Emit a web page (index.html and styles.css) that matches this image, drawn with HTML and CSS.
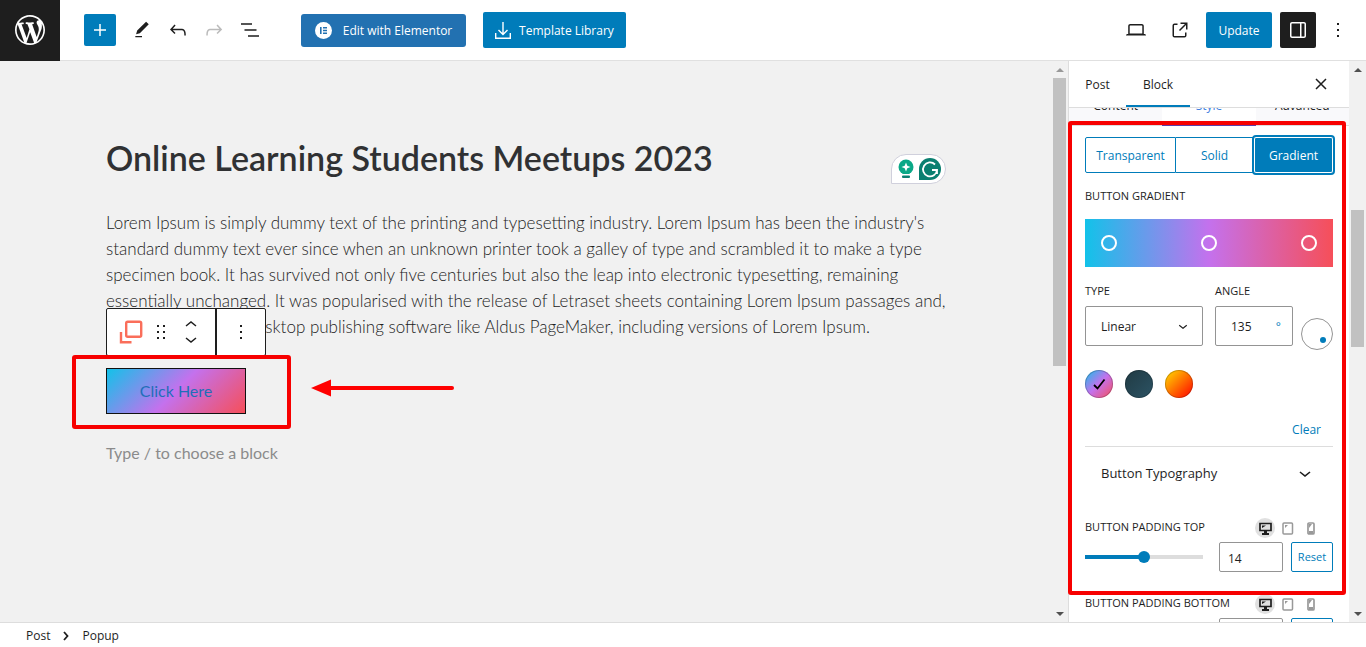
FILE: index.html
```html
<!DOCTYPE html>
<html lang="en">
<head>
<meta charset="utf-8">
<title>Edit Post</title>
<link rel="stylesheet" href="styles.css">
</head>
<body>

<header class="topbar">
	<a class="wp-logo" href="#" aria-label="View posts">
		<svg width="30" height="30" viewBox="0 0 20 20"><path d="M20 10c0-5.51-4.49-10-10-10C4.48 0 0 4.49 0 10c0 5.52 4.48 10 10 10 5.51 0 10-4.48 10-10zM7.78 15.37L4.37 6.22c.55-.02 1.17-.08 1.17-.08.5-.06.44-1.13-.06-1.11 0 0-1.45.11-2.37.11-.18 0-.37 0-.58-.01C4.12 2.69 6.87 1.11 10 1.11c2.33 0 4.45.87 6.05 2.34-.68-.11-1.65.39-1.65 1.58 0 .74.45 1.36.9 2.1.35.61.55 1.36.55 2.46 0 1.49-1.4 5-1.4 5l-3.03-8.37c.54-.02.82-.17.82-.17.5-.05.44-1.25-.06-1.22 0 0-1.44.12-2.38.12-.87 0-2.33-.12-2.33-.12-.5-.03-.56 1.2-.06 1.22l.92.08 1.26 3.41zM17.41 10c.24-.64.74-1.87.43-4.25.7 1.29 1.05 2.71 1.05 4.25 0 3.29-1.73 6.24-4.4 7.78.97-2.59 1.94-5.2 2.92-7.78zM6.1 18.09C3.12 16.65 1.11 13.53 1.11 10c0-1.3.23-2.48.72-3.59C3.25 10.3 4.67 14.2 6.1 18.09zm4.03-6.63l2.58 6.98c-.86.29-1.76.45-2.71.45-.79 0-1.57-.11-2.29-.33.81-2.38 1.62-4.74 2.42-7.1z"/></svg>
	</a>
	<div class="tools">
		<button class="add" aria-label="Add block"><svg class="icon" viewBox="0 0 24 24"><path d="M11.25 6h1.5v5.25H18v1.5h-5.25V18h-1.5v-5.25H6v-1.5h5.25z"/></svg></button>
		<button class="tool" aria-label="Tools"><svg class="icon" viewBox="0 0 24 24"><path d="M20.1 5.1L16.9 2 6.2 12.7l-1.3 4.4 4.5-1.2L20.1 5.1zM4 20.8h8v-1.5H4v1.5z"/></svg></button>
		<button class="tool" aria-label="Undo"><svg class="icon" viewBox="0 0 24 24"><path d="M18.3 11.7c-.6-.6-1.4-.9-2.3-.9H6.7l2.9-3.3-1.1-1-4.5 5L8.5 16l1-1-2.7-2.7H16c.5 0 .9.2 1.3.5 1 1 1 3.4 1 4.5v.3h1.5v-.2c0-1.5 0-4.3-1.5-5.7z"/></svg></button>
		<button class="tool off" aria-label="Redo"><svg class="icon" viewBox="0 0 24 24"><path d="M15.6 6.5l-1.1 1 2.9 3.3H8c-.9 0-1.7.3-2.3.9-1.4 1.5-1.4 4.2-1.4 5.6v.2h1.5v-.3c0-1.1 0-3.5 1-4.5.3-.3.7-.5 1.3-.5h9.2L14.5 15l1.1 1.1 4.6-4.6-4.6-5z"/></svg></button>
		<button class="tool" aria-label="Document overview"><svg class="icon" viewBox="0 0 24 24"><path d="M3 5.2h11v1.5H3zM6.5 11.2h12v1.5h-12zM10 17.2h11v1.5H10z"/></svg></button>
	</div>
	<button class="btn elementor"><svg width="17" height="17" viewBox="0 0 17 17"><circle cx="8.5" cy="8.5" r="8.5" fill="#fff"/><path fill="#2271b1" d="M5 5h1.6v7H5zM8 5h4v1.4H8zM8 7.8h4v1.4H8zM8 10.6h4V12H8z"/></svg>Edit with Elementor</button>
	<button class="btn library"><svg width="16" height="18" viewBox="0 0 16 18" fill="none" stroke="#fff" stroke-width="1.4"><path d="M8 0v12M3.5 8L8 12.5 12.5 8M.7 11v5.3h14.6V11"/></svg>Template Library</button>
	<div class="actions">
		<button class="tool" aria-label="Preview"><svg class="icon" viewBox="0 0 24 24"><path d="M20.5 16h-.7V8c0-1.1-.9-2-2-2H6.2c-1.1 0-2 .9-2 2v8h-.7c-.8 0-1.5.7-1.5 1.5h20c0-.8-.7-1.5-1.5-1.5zM5.7 8c0-.3.2-.5.5-.5h11.6c.3 0 .5.2.5.5v7.6H5.7V8z"/></svg></button>
		<button class="tool" aria-label="View post"><svg class="icon" viewBox="0 0 24 24"><path d="M19.5 4.5h-7V6h4.44l-5.97 5.97 1.06 1.06L18 7.06v4.44h1.5v-7Zm-13 1a2 2 0 0 0-2 2v10a2 2 0 0 0 2 2h10a2 2 0 0 0 2-2v-3H17v3a.5.5 0 0 1-.5.5h-10a.5.5 0 0 1-.5-.5v-10a.5.5 0 0 1 .5-.5h3V5.5h-3Z"/></svg></button>
		<button class="btn update">Update</button>
		<button class="settings" aria-label="Settings"><svg class="icon" viewBox="0 0 24 24"><path fill-rule="evenodd" d="M18 4H6c-1.1 0-2 .9-2 2v12c0 1.1.9 2 2 2h12c1.1 0 2-.9 2-2V6c0-1.1-.9-2-2-2zm-4 14.5H6c-.3 0-.5-.2-.5-.5V6c0-.3.2-.5.5-.5h8v13zm4.500-.5c0 .3-.2.5-.5.5h-2.500v-13H18c.3 0 .5.2.5.5v12z"/></svg></button>
		<button class="more" aria-label="Options"><svg class="icon" viewBox="0 0 24 24"><path d="M13 19h-2v-2h2v2zm0-6h-2v-2h2v2zm0-6h-2V5h2v2z"/></svg></button>
	</div>
</header>

<div class="workspace">
	<main class="editor">
		<article class="post">
			<h1>Online Learning Students Meetups 2023</h1>
			<p>Lorem Ipsum is simply dummy text of the printing and typesetting industry. Lorem Ipsum has been the industry's<br>
			standard dummy text ever since when an unknown printer took a galley of type and scrambled it to make a type<br>
			specimen book. It has survived not only five centuries but also the leap into electronic typesetting, remaining<br>
			essentially unchanged. It was popularised with the release of Letraset sheets containing Lorem Ipsum passages and,<br>
			more recently with desktop publishing software like Aldus PageMaker, including versions of Lorem Ipsum.</p>
			<div class="popup-block">
				<button class="click-here">Click Here</button>
				<div class="block-toolbar">
					<button class="popup-icon" aria-label="Popup"><svg width="24" height="24" viewBox="0 0 24 24" fill="none" stroke="#fa6e5a" stroke-width="2.4"><rect x="7.2" y="1.7" width="15" height="15" rx="1.5"/><path d="M2 12v10.3h10.5"/></svg></button>
					<button aria-label="Drag"><svg class="icon" viewBox="0 0 24 24"><path d="M8 7h2V5H8v2zm0 6h2v-2H8v2zm0 6h2v-2H8v2zm6-14v2h2V5h-2zm0 8h2v-2h-2v2zm0 6h2v-2h-2v2z"/></svg></button>
					<button class="movers" aria-label="Move"><svg width="14" height="24" viewBox="0 0 14 24" fill="none" stroke="#1e1e1e" stroke-width="1.5"><path d="M2 6l5-4 5 4M2 18l5 4 5-4"/></svg></button>
					<button class="block-more" aria-label="Options"><svg class="icon" viewBox="0 0 24 24"><path d="M13 19h-2v-2h2v2zm0-6h-2v-2h2v2zm0-6h-2V5h2v2z"/></svg></button>
				</div>
				<div class="mark mark-button"></div>
				<svg class="arrow" width="144" height="18" viewBox="0 0 144 18"><path d="M0 9L20 .5v17z" fill="red"/><path d="M18 9h123" stroke="red" stroke-width="4" stroke-linecap="round"/></svg>
			</div>
			<p class="placeholder">Type / to choose a block</p>
			<div class="grammar">
				<svg width="16" height="20" viewBox="0 0 16 20"><circle cx="8" cy="8" r="7.5" fill="#0aa887"/><path d="M4 12h8l-1 4H5z" fill="#0aa887"/><path d="M3 15.5h10" stroke="#fff"/><rect x="4" y="16.500" width="8" height="2.5" rx="1" fill="#0a7f70"/><path d="M8 3.5l1.3 3.2L12.5 8 9.3 9.3 8 12.5 6.7 9.3 3.5 8l3.2-1.3z" fill="#fff"/></svg>
				<svg width="22" height="22" viewBox="0 0 22 22"><path d="M11 0a11 11 0 0 1 0 22H0V11A11 11 0 0 1 11 0z" fill="#0a7f70"/><path d="M16 6.5A7 7 0 1 0 18 12h-5M18 12v4" fill="none" stroke="#fff" stroke-width="1.8"/></svg>
			</div>
		</article>
		<div class="scrollbar">
			<i class="up"></i><i class="thumb thumb-editor"></i><i class="down"></i>
		</div>
	</main>

	<aside class="sidebar">
		<div class="panel">
			<div class="panel-tabs">
				<button>Post</button>
				<button class="current">Block</button>
				<button class="close" aria-label="Close settings"><svg width="12" height="12" viewBox="0 0 12 12" stroke="#1e1e1e" stroke-width="1.5"><path d="M1 1l10 10M11 1L1 11"/></svg></button>
			</div>
			<div class="panel-body">
				<div class="style-tabs"><button>Content</button><button class="current">Style</button><button>Advanced</button></div>
				<div class="controls">
					<div class="fill-type"><button>Transparent</button><button>Solid</button><button class="current">Gradient</button></div>
					<div class="label">Button Gradient</div>
					<div class="gradient-bar"><button aria-label="Stop 1"></button><button aria-label="Stop 2"></button><button aria-label="Stop 3"></button></div>
					<div class="gradient-opts">
						<div class="type-field">
							<label class="label" for="type">Type</label>
							<div class="select-wrap">
								<select id="type"><option>Linear</option><option>Radial</option></select>
								<svg class="icon chev" viewBox="0 0 24 24"><path d="M17.5 11.6L12 16l-5.5-4.4.9-1.2L12 14l4.5-3.6 1 1.2z"/></svg>
							</div>
						</div>
						<div class="angle-field">
							<label class="label" for="angle">Angle</label>
							<div class="angle-box"><input id="angle" type="text" value="135"><span>°</span></div>
						</div>
						<div class="dial"><i></i></div>
					</div>
					<div class="swatches">
						<button class="sw-one" aria-label="Gradient 1"><svg width="28" height="28" viewBox="0 0 28 28" fill="none" stroke="#000" stroke-width="1.8"><path d="M9 15l3.500 3.500L19.500 9.500"/></svg></button>
						<button class="sw-two" aria-label="Gradient 2"></button>
						<button class="sw-three" aria-label="Gradient 3"></button>
					</div>
					<button class="clear">Clear</button>
					<button class="typography">Button Typography<svg class="icon" viewBox="0 0 24 24"><path d="M17.5 11.6L12 16l-5.5-4.4.9-1.2L12 14l4.5-3.6 1 1.2z"/></svg></button>
					<div class="range-control">
						<div class="range-head">
							<label class="label" for="pad-top">Button Padding Top</label>
							<div class="devices">
								<button class="current" aria-label="Desktop"><svg width="13" height="13" viewBox="0 0 13 13"><path fill="none" stroke="#1e1e1e" stroke-width="1.7" d="M1 1.500h11v7H1z"/><path fill="#1e1e1e" d="M5 9h3v2h2v2H3v-2h2zM3 3.500h4L3 6z"/></svg></button>
								<button aria-label="Tablet"><svg width="12" height="13" viewBox="0 0 12 13"><rect x="1" y="1" width="9.500" height="11" rx="1" fill="none" stroke="#999" stroke-width="1.5"/><path fill="#999" d="M3 3h3L3 6z"/></svg></button>
								<button aria-label="Mobile"><svg width="8" height="13" viewBox="0 0 8 13"><rect x="1" y="1" width="6" height="11" rx="1" fill="none" stroke="#999" stroke-width="1.700"/><path fill="#999" d="M2 2h3L2 6zM2 9h4v3H2z"/></svg></button>
							</div>
						</div>
						<div class="range-row">
							<input id="pad-top" type="range" min="0" max="28" value="14">
							<input class="num" type="text" value="14" aria-label="Button padding top value">
							<button class="reset">Reset</button>
						</div>
					</div>
					<div class="range-control">
						<div class="range-head">
							<label class="label" for="pad-bottom">Button Padding Bottom</label>
							<div class="devices">
								<button class="current" aria-label="Desktop"><svg width="13" height="13" viewBox="0 0 13 13"><path fill="none" stroke="#1e1e1e" stroke-width="1.7" d="M1 1.500h11v7H1z"/><path fill="#1e1e1e" d="M5 9h3v2h2v2H3v-2h2zM3 3.500h4L3 6z"/></svg></button>
								<button aria-label="Tablet"><svg width="12" height="13" viewBox="0 0 12 13"><rect x="1" y="1" width="9.500" height="11" rx="1" fill="none" stroke="#999" stroke-width="1.5"/><path fill="#999" d="M3 3h3L3 6z"/></svg></button>
								<button aria-label="Mobile"><svg width="8" height="13" viewBox="0 0 8 13"><rect x="1" y="1" width="6" height="11" rx="1" fill="none" stroke="#999" stroke-width="1.700"/><path fill="#999" d="M2 2h3L2 6zM2 9h4v3H2z"/></svg></button>
							</div>
						</div>
						<div class="range-row">
							<input id="pad-bottom" type="range" min="0" max="28" value="14">
							<input class="num" type="text" value="14" aria-label="Button padding bottom value">
							<button class="reset">Reset</button>
						</div>
					</div>
				</div>
			</div>
		</div>
		<div class="scrollbar">
			<i class="up"></i><i class="thumb thumb-panel"></i><i class="down"></i>
		</div>
		<div class="mark mark-panel"></div>
	</aside>
</div>

<footer class="breadcrumb">
	<a href="#">Post</a>
	<svg width="6" height="10" viewBox="0 0 6 10" fill="none" stroke="#1e1e1e" stroke-width="1.8"><path d="M1 1l3.500 4L1 9"/></svg>
	<a href="#">Popup</a>
</footer>

</body>
</html>
```
FILE: styles.css
```css
* { box-sizing: border-box; }
body {
	margin: 0;
	height: 100vh;
	display: flex;
	flex-direction: column;
	overflow: hidden;
	background: #fff;
	color: #1e1e1e;
	font: 12px/16px "Open Sans", "Noto Sans", sans-serif;
}
button, input, select { font: inherit; color: inherit; margin: 0; }
button { border: 0; background: none; padding: 0; }
svg { display: block; flex: none; }
a { color: inherit; text-decoration: none; }
.icon { width: 24px; height: 24px; fill: currentColor; }

/* top bar */
.topbar { display: flex; align-items: center; height: 61px; flex: none; border-bottom: 1px solid #e0e0e0; }
.wp-logo { display: flex; align-items: center; justify-content: center; width: 60px; height: 61px; background: #1e1e1e; fill: #fff; }
.tools { display: flex; align-items: center; padding-left: 24px; }
.tools button, .topbar .tool { display: flex; align-items: center; justify-content: center; width: 36px; height: 36px; }
.tools .add { width: 32px; height: 32px; margin-right: 8px; border-radius: 2px; background: #007cba; color: #fff; }
.tools .tool:nth-child(2) .icon { width: 20px; height: 20px; }
.tools .off { color: #bbb; }
.btn { display: flex; align-items: center; justify-content: center; height: 36px; padding-top: 1px; border-radius: 2px; color: #fff; background: #007cba; }
.elementor { width: 165px; height: 33px; margin-left: 33px; gap: 11px; border-radius: 3px; background: #2271b1; }
.library { width: 143px; margin-left: 17px; gap: 8px; }
.actions { display: flex; align-items: center; gap: 8px; margin-left: auto; padding-right: 16px; }
.update { width: 66px; }
.settings { display: flex; align-items: center; justify-content: center; width: 36px; height: 36px; border-radius: 2px; background: #1e1e1e; color: #fff; }
.more { padding-left: 2px; }

/* canvas */
.workspace { display: flex; flex: 1; min-height: 0; }
.editor { display: flex; flex: 1; min-width: 0; background: #f1f1f1; }
.post { position: relative; flex: 1; min-width: 0; padding: 77px 105px 0 106px; font: 300 17px/26px Lato, "Open Sans", sans-serif; color: #222; }
.post h1 { margin: 0; font-size: 34px; line-height: 40px; font-weight: 600; color: #303133; white-space: nowrap; }
.post p { margin: 32px 0 0; white-space: nowrap; }
.popup-block { position: relative; margin-top: 28px; }
.click-here { display: block; width: 140px; height: 46px; border: 1px solid #111; font-weight: 400; font-size: 16px; color: #1f6fb8; background: linear-gradient(135deg, #12c2e9, #c471ed 50%, #f64f59); }
.post .placeholder { margin-top: 26px; font-weight: 400; font-size: 16px; color: #8b8b8b; }
.block-toolbar { position: absolute; left: 0; bottom: 100%; margin-bottom: 12px; display: flex; align-items: center; width: 160px; height: 48px; border: 1px solid #1e1e1e; border-radius: 2px; background: #fff; color: #1e1e1e; }
.block-toolbar .popup-icon { margin: 0 6px 0 12px; }
.block-toolbar .movers { margin: 0 17px 0 11px; }
.block-toolbar .block-more { display: flex; flex: 1; align-items: center; justify-content: center; height: 46px; border-left: 2px solid #1e1e1e; }
.grammar { position: absolute; right: 105px; top: 93px; display: flex; align-items: center; gap: 5px; width: 55px; height: 30px; padding-left: 6px; border: 1px solid #d0d0dc; border-radius: 15px 15px 15px 0; background: #fff; }

/* highlights */
.mark { position: absolute; border: 4px solid #f70000; border-radius: 3px; pointer-events: none; }
.mark-button { left: -34px; top: -13px; width: 219px; height: 74px; }
.mark-panel { inset: 60px 20px 27px 0; }
.arrow { position: absolute; left: 205px; top: 11px; }

/* scrollbars */
.scrollbar { display: flex; flex-direction: column; align-items: center; flex: none; width: 17px; padding: 7px 2px 6px; background: #f1f1f1; }
.scrollbar .up, .scrollbar .down { border: 4px solid transparent; border-top: 0; border-bottom-color: #505050; }
.scrollbar .down { border-top: 4px solid #505050; border-bottom: 0; margin-top: auto; }
.editor .up { border-bottom-color: #999; }
.thumb { width: 13px; background: #c1c1c1; }
.thumb-editor { height: 288px; margin-top: 6px; }
.thumb-panel { height: 137px; margin-top: 138px; }

/* settings panel */
.sidebar { position: relative; display: flex; flex: none; width: 298px; }
.panel { display: flex; flex-direction: column; flex: 1; min-width: 0; border-left: 1px solid #ddd; }
.panel-tabs { display: flex; align-items: stretch; flex: none; height: 47px; border-bottom: 1px solid #ddd; font-size: 12px; }
.panel-tabs button { width: 57px; padding-top: 2px; }
.panel-tabs .current { width: 64px; padding-top: 4px; border-bottom: 2px solid #007cba; }
.panel-tabs .close { display: flex; align-items: center; justify-content: center; margin-left: auto; padding: 0; }
.panel-body { flex: 1; min-height: 0; overflow: hidden; }
.style-tabs { display: flex; height: 37px; margin-top: -19px; background: #f9f9fb; }
.style-tabs button { flex: 1; padding-bottom: 2px; border-bottom: 1px solid #ddd; }
.style-tabs .current { background: #fff; color: #3f7fdf; border-bottom: 2px solid #5f3fa8; }
.controls { padding: 11px 16px 0; }
.label { display: block; font-size: 11px; line-height: 16px; text-transform: uppercase; white-space: nowrap; }
.fill-type { display: flex; margin-bottom: 15px; color: #007cba; }
.fill-type button { width: 78px; height: 36px; padding-top: 2px; border: 1px solid #007cba; border-left: 0; }
.fill-type button:first-child { width: 91px; border-left: 1px solid #007cba; border-radius: 2px 0 0 2px; }
.fill-type .current { flex: 1; border: 1px solid #fff; border-radius: 2px; outline: 2px solid #007cba; background: #007cba; color: #fff; }
.gradient-bar { display: flex; align-items: center; justify-content: space-between; height: 48px; margin: 15px 0 16px; padding: 0 16px; background: linear-gradient(90deg, #12c2e9, #c471ed 50%, #f64f59); }
.gradient-bar button { width: 16px; height: 16px; border: 2px solid #fff; border-radius: 50%; }
.gradient-opts { display: flex; align-items: flex-end; }
.gradient-opts .label { margin-bottom: 7px; }
.type-field { width: 118px; margin-right: 12px; }
.select-wrap { position: relative; }
.select-wrap select { appearance: none; width: 100%; height: 40px; padding: 2px 15px 0; border: 1px solid #949494; border-radius: 2px; background: #fff; }
.chev { position: absolute; right: 11px; top: 11px; width: 18px; height: 18px; pointer-events: none; }
.angle-box { display: flex; align-items: center; width: 78px; height: 40px; padding: 2px 11px 0 15px; border: 1px solid #949494; border-radius: 2px; }
.angle-box input { flex: 1; min-width: 0; padding: 0; border: 0; outline: 0; background: none; }
.angle-box span { color: #007cba; }
.dial { display: flex; align-items: flex-end; justify-content: flex-end; width: 32px; height: 32px; margin: 0 0 -4px auto; padding: 6px; border: 1px solid #949494; border-radius: 50%; }
.dial i { width: 6px; height: 6px; border-radius: 50%; background: #007cba; }
.swatches { display: flex; gap: 12px; margin-top: 24px; }
.swatches button { width: 28px; height: 28px; border-radius: 50%; box-shadow: inset 0 0 0 1px rgba(0, 0, 0, .2); }
.sw-one { background: linear-gradient(135deg, #12c2e9, #c471ed 50%, #f64f59); }
.sw-two { background: linear-gradient(135deg, #203a43, #2c5364); }
.sw-three { background: linear-gradient(135deg, #ffe000, #ff0000); }
.clear { display: block; margin: 24px 12px 8px auto; color: #007cba; }
.typography { display: flex; align-items: center; justify-content: space-between; width: 100%; height: 53px; padding: 0 16px; border-top: 1px solid #ddd; font-size: 13px; }
.range-control { height: 76px; }
.typography + .range-control { margin-top: 18px; }
.range-head { display: flex; align-items: center; justify-content: space-between; height: 20px; }
.devices { display: flex; align-items: center; gap: 3px; padding: 2px 12px 0 0; }
.devices button { display: flex; align-items: center; justify-content: center; width: 20px; height: 20px; }
.devices .current { border-radius: 50%; background: #e0e0e0; }
.range-row { display: flex; align-items: center; padding-top: 5px; }
.range-row input[type=range] { appearance: none; width: 118px; height: 12px; margin-right: 16px; background: linear-gradient(90deg, #007cba 50%, #ddd 50%) center / 100% 4px no-repeat; }
.range-row input[type=range]::-webkit-slider-thumb { appearance: none; width: 12px; height: 12px; border-radius: 50%; background: #007cba; }
.range-row .num { width: 64px; height: 30px; margin-right: 8px; padding: 2px 8px 0; border: 1px solid #949494; border-radius: 2px; }
.reset { width: 42px; height: 30px; border: 1px solid #007cba; border-radius: 2px; color: #007cba; font-size: 11px; }

.breadcrumb { display: flex; align-items: center; gap: 13px; flex: none; height: 25px; padding: 1px 0 0 26px; border-top: 1px solid #ddd; }
```
